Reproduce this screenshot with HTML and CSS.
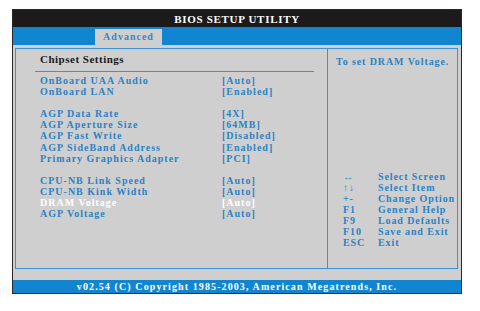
FILE: index.html
```html
<!DOCTYPE html>
<html lang="en">
<head>
    <meta charset="UTF-8">
    <title>BIOS Setup Utility</title>
    <link rel="stylesheet" href="styles.css">
</head>
<body>
    <div class="bios">
        <div class="title-bar">BIOS SETUP UTILITY</div>
        <div class="tab-bar">
            <span class="tab">Advanced</span>
        </div>
        <div class="body">
            <div class="panel">
                <div class="main">
                    <p class="heading">Chipset Settings</p>
                    <div class="items">
                        <span>OnBoard UAA Audio</span><span>[Auto]</span>
                        <span>OnBoard LAN</span><span>[Enabled]</span>
                        <span class="gap"></span><span class="gap"></span>
                        <span>AGP Data Rate</span><span>[4X]</span>
                        <span>AGP Aperture Size</span><span>[64MB]</span>
                        <span>AGP Fast Write</span><span>[Disabled]</span>
                        <span>AGP SideBand Address</span><span>[Enabled]</span>
                        <span>Primary Graphics Adapter</span><span>[PCI]</span>
                        <span class="gap"></span><span class="gap"></span>
                        <span>CPU-NB Link Speed</span><span>[Auto]</span>
                        <span>CPU-NB Kink Width</span><span>[Auto]</span>
                        <span class="selected">DRAM Voltage</span><span class="selected">[Auto]</span>
                        <span>AGP Voltage</span><span>[Auto]</span>
                    </div>
                </div>
                <div class="side">
                    <p class="help">To set DRAM Voltage.</p>
                    <div class="keys">
                        <span>&#8596;</span><span>Select Screen</span>
                        <span>&#8593;&#8595;</span><span>Select Item</span>
                        <span>+-</span><span>Change Option</span>
                        <span>F1</span><span>General Help</span>
                        <span>F9</span><span>Load Defaults</span>
                        <span>F10</span><span>Save and Exit</span>
                        <span>ESC</span><span>Exit</span>
                    </div>
                </div>
            </div>
        </div>
        <div class="footer">v02.54 (C) Copyright 1985-2003, American Megatrends, Inc.</div>
    </div>
</body>
</html>
```

FILE: styles.css
```css
html, body {
    margin: 0;
    background-color: #ffffff;
    font-family: "Liberation Serif", "Times New Roman", serif;
    font-weight: 700;
}
.bios {
    margin: 9px 0 0 12px;
    width: 448px;
    border: 1px solid #2a2828;
}
.title-bar {
    height: 17px;
    line-height: 19px;
    background-color: #1c1a1a;
    color: #ffffff;
    text-align: center;
    font-size: 11px;
    letter-spacing: 0.7px;
}
.tab-bar {
    height: 18px;
    background-color: #1185d0;
    display: flex;
    align-items: flex-end;
}
.tab {
    margin-left: 82px;
    width: 67px;
    height: 16px;
    line-height: 16px;
    background-color: #cfcfcf;
    color: #3a86c4;
    font-size: 10px;
    letter-spacing: 1px;
    text-align: center;
}
.body {
    background-color: #cfcfcf;
    padding: 3px 3px 11px 2px;
}
.panel {
    display: flex;
    height: 219px;
    border: 1px solid #3c93d4;
}
.main {
    width: 311px;
    border-right: 1px solid #3c93d4;
}
.heading {
    margin: 0 13px 0 19px;
    padding: 3px 0 5px 5px;
    line-height: 14px;
    font-size: 11px;
    letter-spacing: 0.5px;
    color: #1a1a1a;
    border-bottom: 1.5px solid #3c93d4;
}
.items {
    display: grid;
    grid-template-columns: 182px auto;
    grid-auto-rows: 11.1px;
    padding: 3px 0 0 24px;
    font-size: 10px;
    line-height: 11px;
    letter-spacing: 1px;
    color: #2d82c4;
}
.items .selected {
    color: #ffffff;
}
.side {
    flex: 1;
    padding: 7px 0 0 8px;
    font-size: 10px;
    line-height: 11px;
    letter-spacing: 0.9px;
    color: #2d82c4;
}
.help {
    margin: 0;
}
.keys {
    display: grid;
    grid-template-columns: 35px auto;
    margin: 104px 0 0 7px;
}
.footer {
    height: 13px;
    line-height: 14px;
    background-color: #1185d0;
    color: #ffffff;
    text-align: center;
    font-size: 10px;
    letter-spacing: 1.1px;
}
```
